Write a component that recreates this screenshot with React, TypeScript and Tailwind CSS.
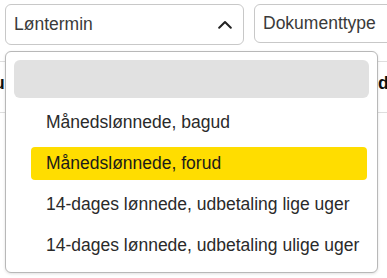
import React from "react";

export default function App() {
  const items = [
    { label: "Månedslønnede, bagud", active: false },
    { label: "Månedslønnede, forud", active: true },
    { label: "14-dages lønnede, udbetaling lige uger", active: false },
    { label: "14-dages lønnede, udbetaling ulige uger", active: false },
  ];
  return (
    <div
      className="relative w-[387px] h-[278px] overflow-hidden bg-white text-[#333333]"
      style={{ fontFamily: '"Liberation Sans", Arial, sans-serif' }}
    >
      <div className="flex gap-[10px] pt-[4px] pl-[5px]">
        <div className="flex items-center justify-between w-[239px] h-[41px] shrink-0 border border-[#c8c8c8] rounded-[6px] pl-[8px] pr-[11px]">
          <span className="text-[17.5px] text-[#3a3a3a]">Løntermin</span>
          <svg width="14" height="9" viewBox="0 0 14 9" fill="none">
            <path d="M1.2 7.8 L7 2 L12.8 7.8" stroke="#222" strokeWidth="2" strokeLinecap="round" strokeLinejoin="round" />
          </svg>
        </div>
        <div className="flex items-center w-[200px] h-[39px] shrink-0 border border-[#c8c8c8] rounded-[6px] pl-[8px]">
          <span className="text-[17.5px] text-[#3a3a3a]">Dokumenttype</span>
        </div>
      </div>

      <div className="mt-[16px] flex items-center justify-between h-[52px] border-t border-b border-[#dedede]">
        <span className="-ml-[6px] text-[17.5px] font-bold text-[#111] -mt-[8px]">u</span>
        <span className="mr-[-2px] text-[17.5px] font-bold text-[#111] -mt-[8px] w-[11px] overflow-hidden">d</span>
      </div>

      <div className="absolute left-[5px] top-[51px] w-[373px] h-[222px] bg-white border border-[#b8b8b8] rounded-[6px] shadow-[0_1px_3px_rgba(0,0,0,0.12)] p-[8px] flex flex-col gap-[8px]">
        <div className="h-[38px] shrink-0 rounded-[6px] bg-[#e1e1e1]" />
        {items.map((it) => (
          <div
            key={it.label}
            className={`h-[33px] shrink-0 ml-[17px] mr-[2px] flex items-center pl-[15px] rounded-[4px] text-[17.5px] ${
              it.active ? "bg-[#ffdd00] text-[#1a1a1a]" : "text-[#2a2a2a]"
            }`}
          >
            {it.label}
          </div>
        ))}
      </div>
    </div>
  );
}
